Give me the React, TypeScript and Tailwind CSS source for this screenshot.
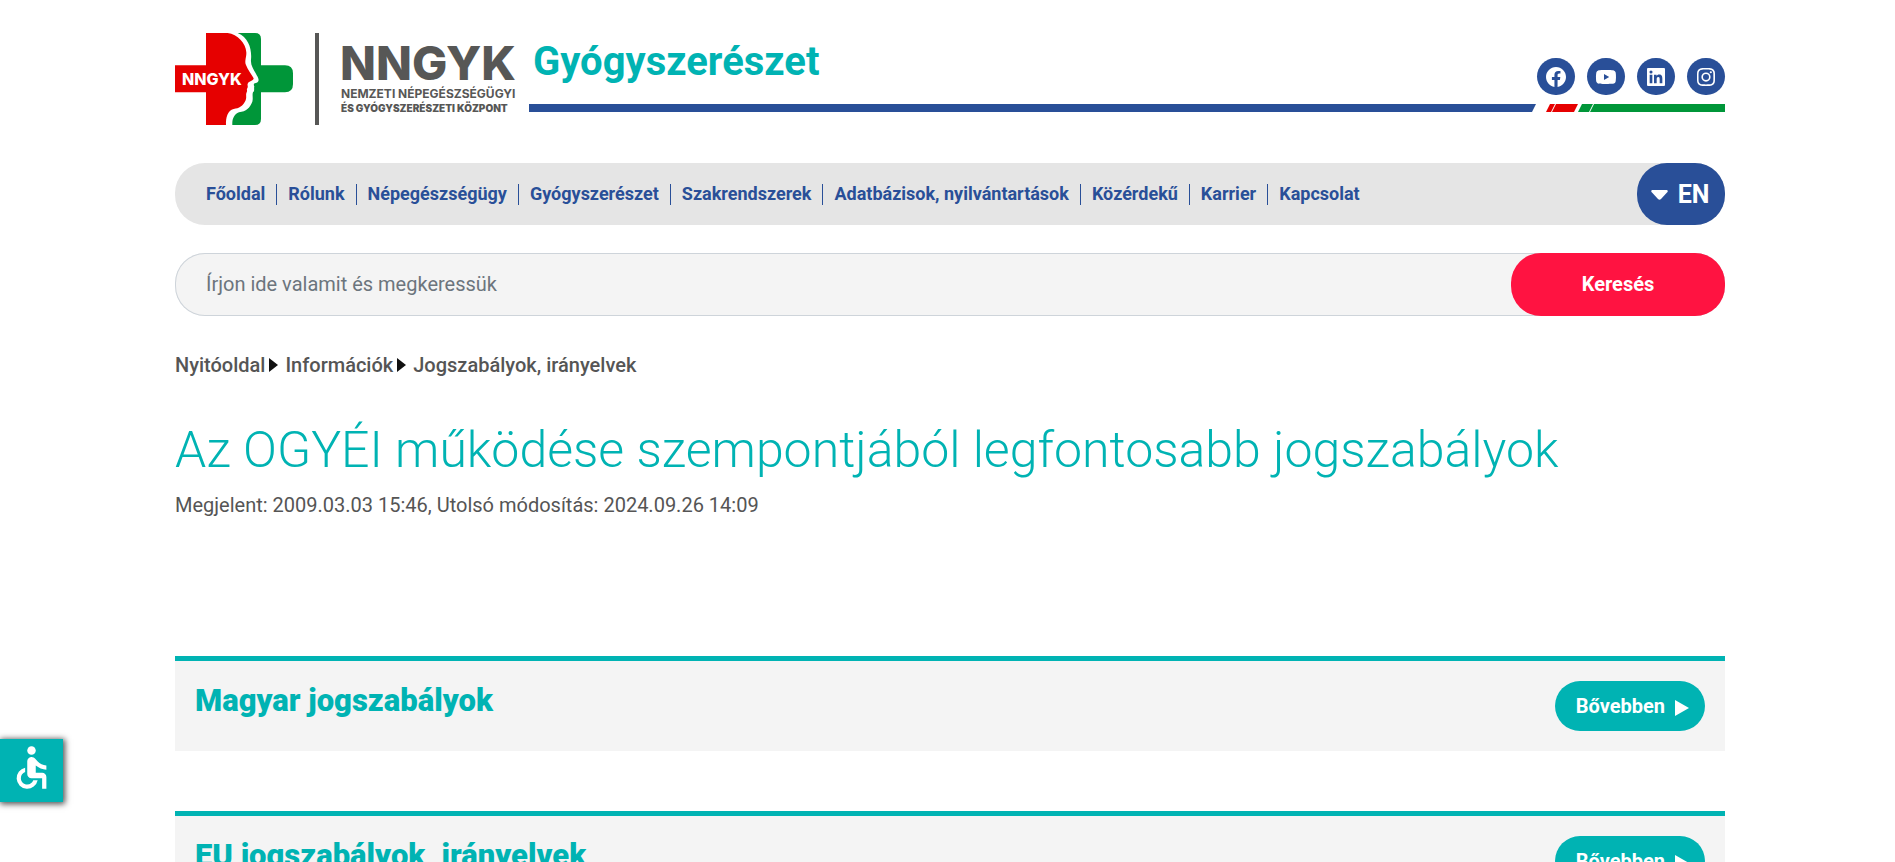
import { useState } from "react";

import {
    BiLogoFacebookCircle,
    BiLogoInstagram,
    BiLogoLinkedinSquare,
    BiLogoYoutube,
} from "react-icons/bi";
import { MdAccessible } from "react-icons/md";

const locale = {
    section: "Gyógyszerészet",
    placeholder: "Írjon ide valamit és megkeressük",
    search: "Keresés",
    title: "Az OGYÉI működése szempontjából legfontosabb jogszabályok",
    dates: "Megjelent: 2009.03.03 15:46, Utolsó módosítás: 2024.09.26 14:09",
    more: "Bővebben",
};

const menu = [
    "Főoldal",
    "Rólunk",
    "Népegészségügy",
    "Gyógyszerészet",
    "Szakrendszerek",
    "Adatbázisok, nyilvántartások",
    "Közérdekű",
    "Karrier",
    "Kapcsolat",
];

const social = [
    { name: "Facebook", Icon: BiLogoFacebookCircle },
    { name: "YouTube", Icon: BiLogoYoutube },
    { name: "LinkedIn", Icon: BiLogoLinkedinSquare },
    { name: "Instagram", Icon: BiLogoInstagram },
];

const breadcrumbs = ["Nyitóoldal", "Információk", "Jogszabályok, irányelvek"];

const sections = ["Magyar jogszabályok", "EU jogszabályok, irányelvek"];

const Logo = () => (
    <a href="#" aria-label="NNGYK" className="shrink-0">
        <svg width="342" height="92" viewBox="0 0 342 92">
            <g transform="scale(0.3333)">
                <path
                    fill="#009639"
                    d="M188 0H240Q258 0 258 18V97H330Q354 97 354 121V154Q354 178 330 178H258V258Q258 276 240 276H172C171 258 177 244 192 238C214 234 224 226 232 206C235 196 231 186 234 178C240 174 236 166 238 160C234 153 238 151 245 149C254 145 251 136 246 128C238 112 226 98 228 80C231 50 222 14 188 0Z"
                />
                <path
                    fill="#e60000"
                    d="M93 0H158C188 4 212 30 214 58C215 72 208 84 213 96C218 110 230 124 236 136C236 143 224 145 219 150C215 156 221 161 217 166C213 169 219 173 215 178C211 184 216 192 212 202C204 220 192 226 176 228C158 232 152 254 153 276H93V178H0V97H93Z"
                />
            </g>
            <text
                x="7"
                y="52"
                fill="#fff"
                className="font-['Inter'] text-[16px] font-extrabold"
            >
                NNGYK
            </text>
            <rect x="140" width="4" height="92" fill="#575756" />
            <g fill="#575756" className="font-['Inter']">
                <text x="165" y="47" className="text-[47px] font-extrabold">
                    NNGYK
                </text>
                <text x="166" y="65" className="text-[12px] font-bold">
                    NEMZETI NÉPEGÉSZSÉGÜGYI
                </text>
                <text x="166" y="79" className="text-[10px] font-black">
                    ÉS GYÓGYSZERÉSZETI KÖZPONT
                </text>
            </g>
        </svg>
    </a>
);

const Stripe = () => (
    <div className="flex h-[8px]" aria-hidden="true">
        <div className="flex-1 bg-[#294f98]" />
        <svg width="60" height="8" viewBox="0 0 60 8">
            <path fill="#294f98" d="M0 0H7L3 8H0Z" />
            <path fill="#e60000" d="M21 0H26L22 8H17ZM27 0H49L45 8H23Z" />
            <path fill="#009639" d="M53 0H60V8H49Z" />
        </svg>
        <svg width="136" height="8" viewBox="0 0 136 8">
            <path fill="#009639" d="M0 0H4L0 8ZM5 0H136V8H1Z" />
        </svg>
    </div>
);

const Card = ({ title }: { title: string }) => (
    <section className="flex items-start justify-between border-t-[5px] border-[#00b3b3] bg-[#f4f4f4] p-5">
        <h2 className="text-[31px] leading-[40px] font-black text-[#00b3b3]">
            {title}
        </h2>
        <a
            href="#"
            className="flex h-[50px] items-center gap-[10px] rounded-[25px] bg-[#00b3b3] pr-4 pl-[21px] text-[20px] font-bold text-white"
        >
            {locale.more}
            <svg width="14" height="16" viewBox="0 0 14 16" className="mt-1">
                <path fill="#fff" d="M0 0L14 8L0 16Z" />
            </svg>
        </a>
    </section>
);

const App = () => {
    const [query, setQuery] = useState("");

    return (
        <div className="min-h-screen bg-white pr-[170px] pl-[175px] font-['Roboto',sans-serif] text-[#555555]">
            <header className="pt-[33px]">
                <div className="flex gap-3">
                    <Logo />
                    <div className="flex-1">
                        <div className="flex h-[71px] items-start justify-between">
                            <a
                                href="#"
                                className="pl-1 text-[40px] leading-[58px] font-bold text-[#00b3b3]"
                            >
                                {locale.section}
                            </a>
                            <div className="flex gap-3 pt-[25px]">
                                {social.map(({ name, Icon }) => (
                                    <a
                                        key={name}
                                        href="#"
                                        aria-label={name}
                                        className="flex h-[37px] w-[38px] items-center justify-center rounded-full bg-[#294f98] text-[24px] text-white"
                                    >
                                        <Icon />
                                    </a>
                                ))}
                            </div>
                        </div>
                        <Stripe />
                    </div>
                </div>

                <nav className="mt-[38px] flex h-[62px] items-center justify-between rounded-[30px] bg-[#e5e5e5] pl-5">
                    <ul className="flex divide-x divide-[#294f98]">
                        {menu.map((item) => (
                            <li key={item} className="flex h-[21px] px-[11px]">
                                <a
                                    href="#"
                                    className="text-[18px] leading-[20px] font-bold whitespace-nowrap text-[#294f98]"
                                >
                                    {item}
                                </a>
                            </li>
                        ))}
                    </ul>
                    <button
                        type="button"
                        className="flex h-full w-[88px] items-center justify-center gap-[10px] rounded-[30px] bg-[#294f98] pt-[2px] pr-[2px] text-[25px] font-bold text-white"
                    >
                        <svg width="17" height="10" viewBox="0 0 17 10">
                            <path
                                fill="#fff"
                                d="M1 0H16Q17.500 1 16 2.500L10 9Q8.500 10.500 7 9L1 2.500Q-.5 1 1 0Z"
                            />
                        </svg>
                        EN
                    </button>
                </nav>
            </header>

            <form
                className="mt-7 flex h-[63px] rounded-[30px] bg-[#f4f4f4] inset-ring inset-ring-[#ced4da]"
                onSubmit={(e) => e.preventDefault()}
            >
                <input
                    type="text"
                    aria-label={locale.placeholder}
                    placeholder={locale.placeholder}
                    value={query}
                    onChange={(e) => setQuery(e.target.value)}
                    className="min-w-0 flex-1 bg-transparent px-[31px] pb-[2px] text-[20px] outline-none placeholder:text-[#6c757d]"
                />
                <button
                    type="submit"
                    className="w-[214px] rounded-[30px] bg-[#ff1341] pb-[2px] text-[20px] font-bold text-white"
                >
                    {locale.search}
                </button>
            </form>

            <main>
                <ol className="mt-[34px] flex text-[20px] leading-[30px] font-medium">
                    {breadcrumbs.map((item, i) => (
                        <li key={item} className="flex items-center">
                            {i > 0 && (
                                <svg
                                    width="9"
                                    height="14"
                                    viewBox="0 0 9 14"
                                    className="mr-[7px] ml-1"
                                >
                                    <path fill="#111" d="M0 0L9 7L0 14Z" />
                                </svg>
                            )}
                            <a href="#">{item}</a>
                        </li>
                    ))}
                </ol>

                <h1 className="mt-10 text-[50px] leading-[60px] font-light text-[#00b3b3]">
                    {locale.title}
                </h1>
                <p className="mt-[10px] text-[20px] leading-[30px]">
                    {locale.dates}
                </p>

                <div className="mt-[136px] flex flex-col gap-[60px]">
                    {sections.map((title) => (
                        <Card key={title} title={title} />
                    ))}
                </div>
            </main>

            <button
                type="button"
                aria-label="Akadálymentesítés"
                className="fixed top-[739px] left-0 flex h-[63px] w-[63px] items-center justify-center bg-[#00b3b3] pb-[6px] text-white shadow-[1px_1px_6px_1px_#000000b3]"
            >
                <MdAccessible size={51} />
            </button>
        </div>
    );
};

export default App;
